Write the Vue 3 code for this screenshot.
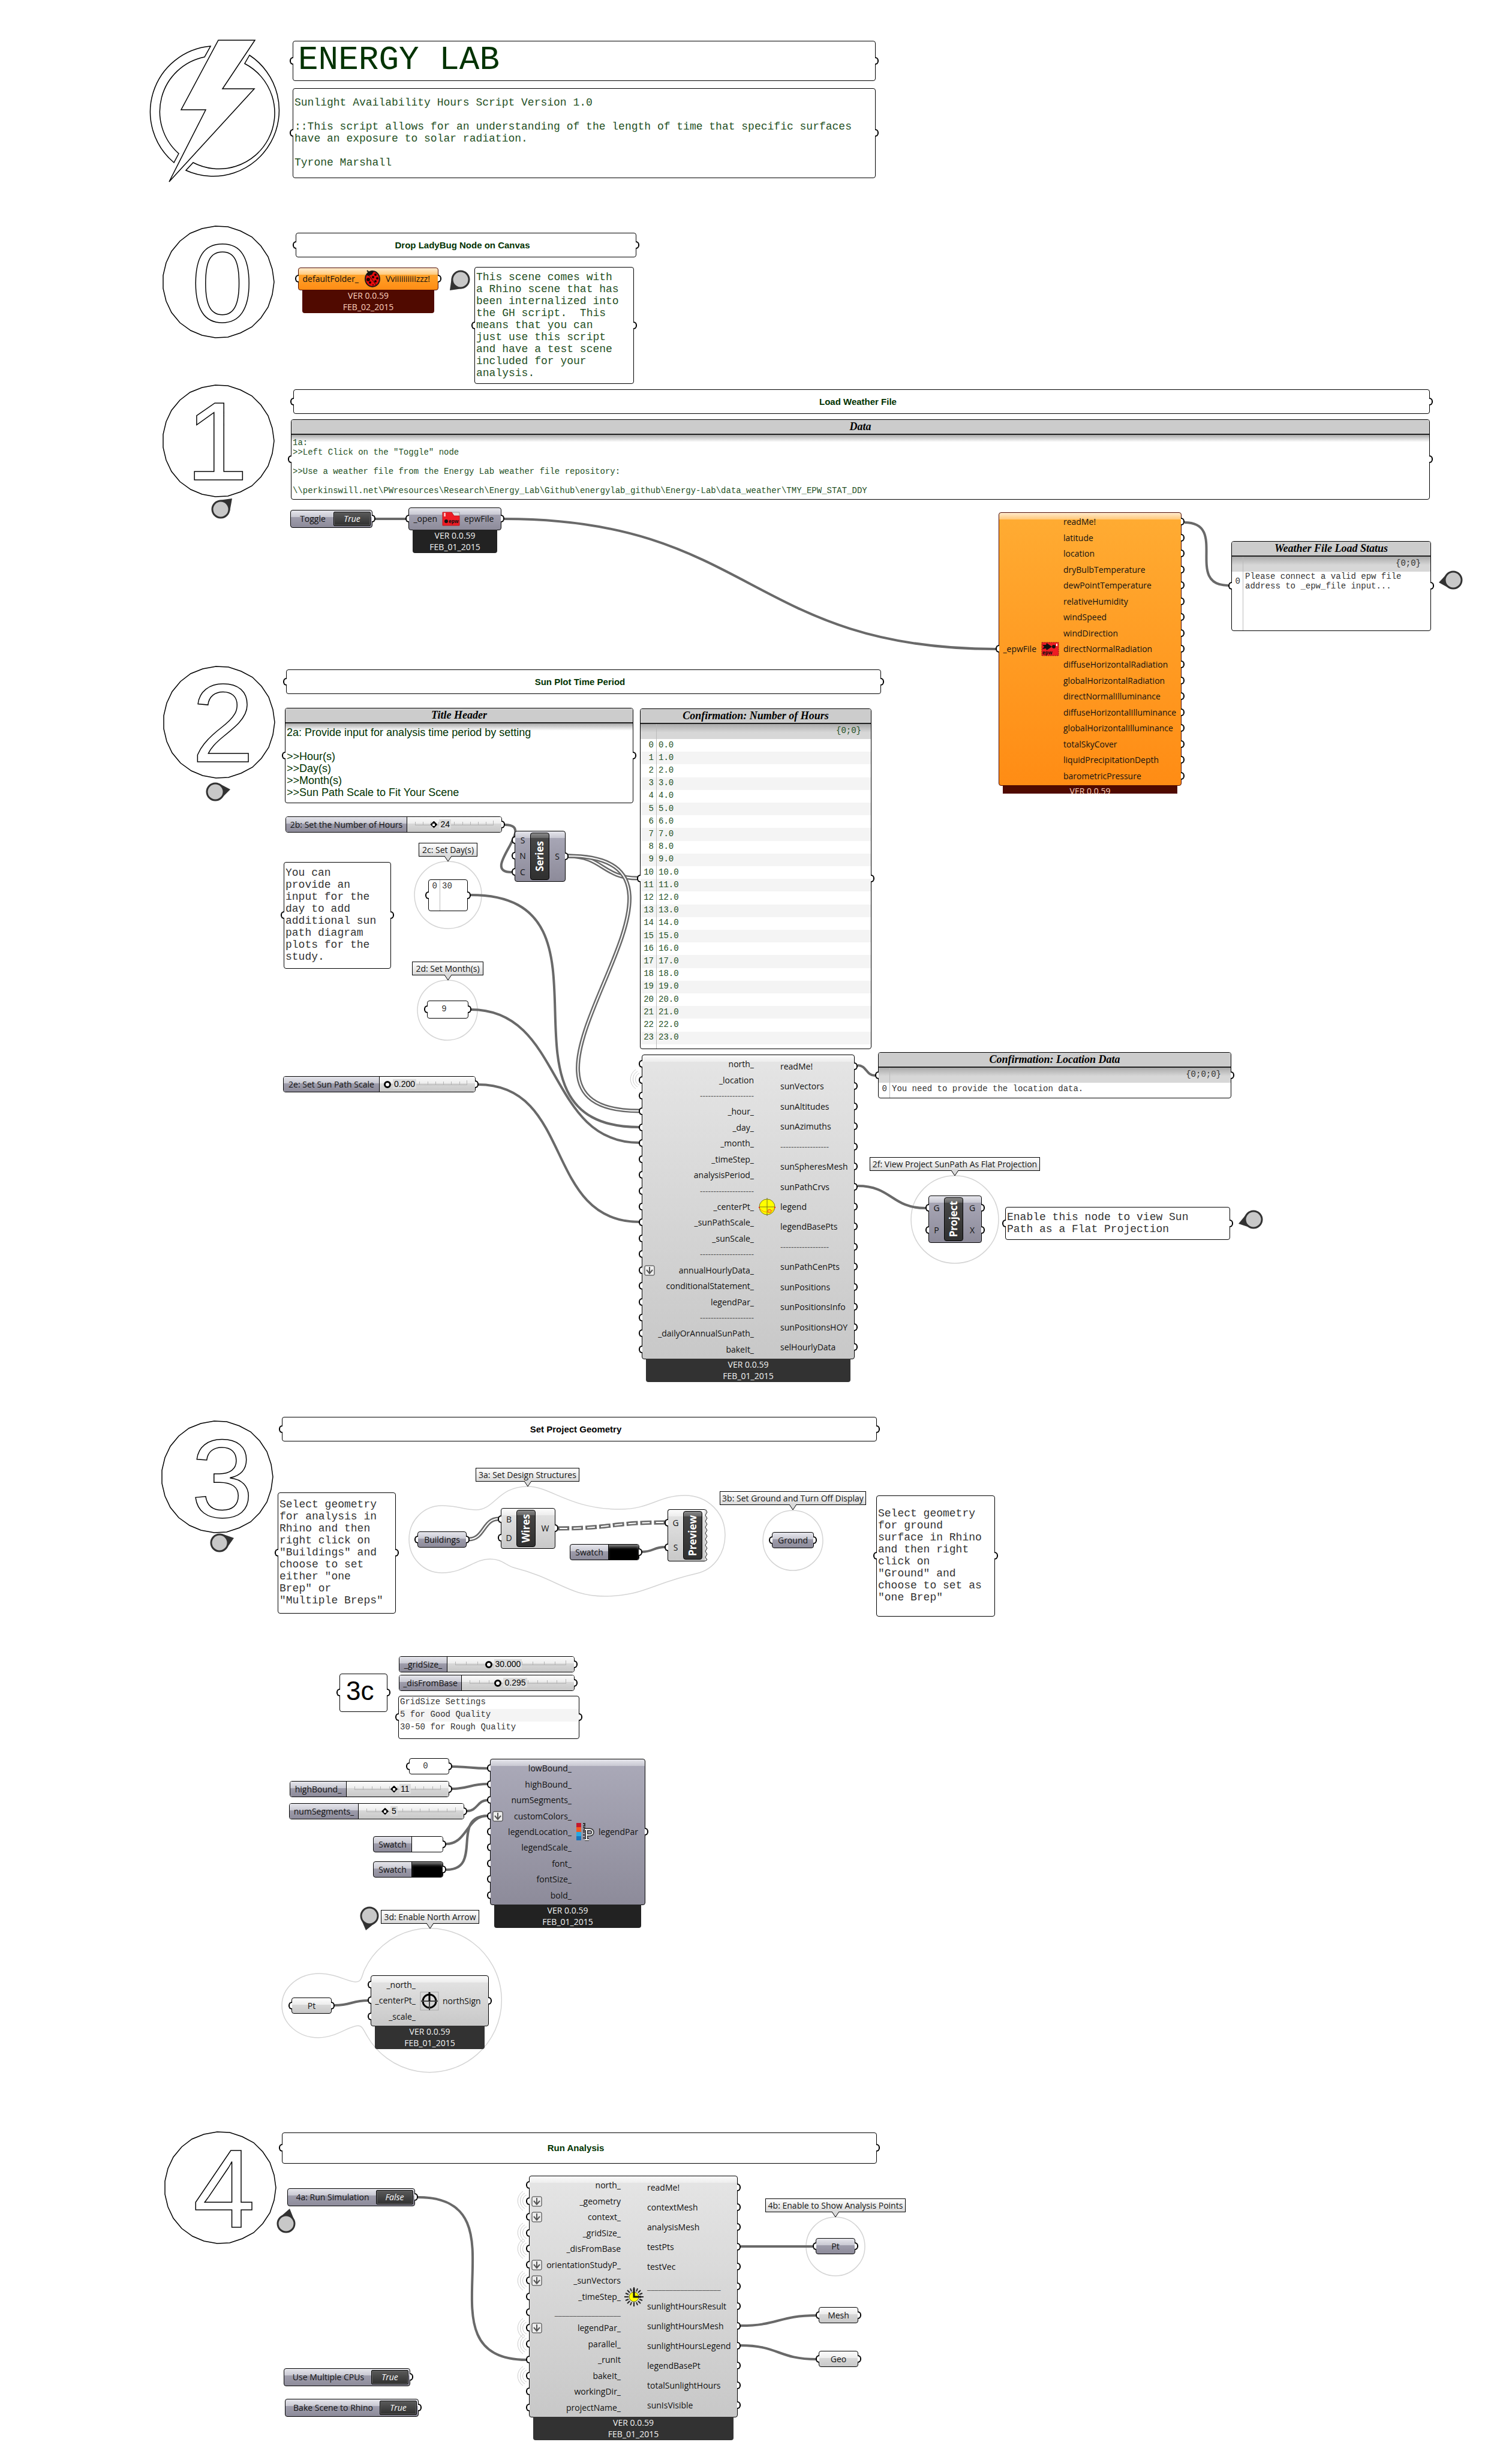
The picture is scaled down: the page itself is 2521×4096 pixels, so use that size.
<script setup>
import { reactive } from 'vue'

const box = (n) => ({ left: n.x + 'px', top: n.y + 'px', width: n.w + 'px', height: n.h + 'px' })

/* Numbered section badges: a 27-sided ring round an outlined digit */
const badges = [
  { n: '0', cx: 364, cy: 470, tx: 319, ty: 536 },
  { n: '1', cx: 364, cy: 735, tx: 310, ty: 800 },
  { n: '2', cx: 365, cy: 1204, tx: 320, ty: 1270 },
  { n: '3', cx: 362, cy: 2462, tx: 319, ty: 2529 },
  { n: '4', cx: 367, cy: 3647, tx: 322, ty: 3713 },
]
const ring = (cx, cy, r = 93, sides = 27) =>
  Array.from({ length: sides }, (_, i) => {
    const a = (i * 2 * Math.PI) / sides
    return Math.round(cx + r * Math.cos(a)) + ',' + Math.round(cy + r * Math.sin(a))
  }).join(' ')

/* Pins: centre of the disc and the tip they point at */
const pins = [
  { x: 768, y: 466, tx: 750, ty: 484 },
  { x: 368, y: 849, tx: 387, ty: 831 },
  { x: 2423, y: 967, tx: 2399, ty: 971 },
  { x: 359, y: 1320, tx: 384, ty: 1316 },
  { x: 2090, y: 2033, tx: 2065, ty: 2040 },
  { x: 366, y: 2572, tx: 390, ty: 2564 },
  { x: 616, y: 3194, tx: 610, ty: 3218 },
  { x: 477, y: 3707, tx: 483, ty: 3682 },
]
const pinTail = (p) => {
  const a = Math.atan2(p.ty - p.y, p.tx - p.x)
  const at = (d) => `${Math.round(p.x + 15 * Math.cos(a + d))},${Math.round(p.y + 15 * Math.sin(a + d))}`
  return `${p.tx},${p.ty} ${at(1)} ${at(-1)}`
}

/* Wires: S-curves that leave and arrive horizontally */
const curve = ([x1, y1, x2, y2]) => {
  const c = Math.round(Math.max((x2 - x1) / 2, Math.abs(y2 - y1) * 0.7))
  return `M${x1} ${y1}C${x1 + c} ${y1} ${x2 - c} ${y2} ${x2} ${y2}`
}
const wires = [
  [625, 865, 678, 865], [841, 865, 1661, 1082], [1975, 871, 2048, 976],
  [842, 1375, 853, 1454], [785, 1492, 1066, 1879], [785, 1683, 1066, 1905],
  [797, 1808, 1066, 2037], [1430, 1776, 1459, 1793], [1430, 1977, 1543, 2014],
  [1070, 2587, 1109, 2579], [753, 2945, 813, 2948], [753, 2982, 813, 2974],
  [779, 3019, 813, 3001], [744, 3074, 813, 3027], [744, 3117, 813, 3027],
  [558, 3343, 614, 3335], [697, 3663, 878, 3934], [1235, 3745, 1355, 3745],
  [1235, 3877, 1361, 3860], [1235, 3910, 1361, 3933],
]
const listWires = [[947, 1427, 1063, 1464], [947, 1427, 1066, 1852], [782, 2566, 831, 2532]]
const treeWire = [930, 2548, 1109, 2538]
const broadcasts = [[1066, 1799], [878, 3669], [878, 3722], [878, 3749], [878, 3802], [878, 3881], [878, 3908], [878, 3961]]

const groups = [[747, 1492, 56], [746, 1684, 50], [1592, 2033, 73], [1322, 2568, 50], [1393, 3745, 49]]

const headings = [
  { x: 493, y: 388, w: 568, h: 41, text: 'Drop LadyBug Node on Canvas' },
  { x: 489, y: 649, w: 1895, h: 41, text: 'Load Weather File' },
  { x: 477, y: 1116, w: 992, h: 41, text: 'Sun Plot Time Period' },
  { x: 470, y: 2362, w: 992, h: 41, text: 'Set Project Geometry', ink: true },
  { x: 470, y: 3555, w: 992, h: 52, text: 'Run Analysis' },
]

const notes = [
  { x: 488, y: 147, w: 972, h: 150, green: true, text: 'Sunlight Availability Hours Script Version 1.0\n\n::This script allows for an understanding of the length of time that specific surfaces\nhave an exposure to solar radiation.\n\nTyrone Marshall' },
  { x: 791, y: 445, w: 266, h: 195, green: true, text: 'This scene comes with\na Rhino scene that has\nbeen internalized into\nthe GH script.  This\nmeans that you can\njust use this script\nand have a test scene\nincluded for your\nanalysis.' },
  { x: 473, y: 1437, w: 179, h: 178, text: 'You can\nprovide an\ninput for the\nday to add\nadditional sun\npath diagram\nplots for the\nstudy.' },
  { x: 1676, y: 2012, w: 375, h: 55, text: 'Enable this node to view Sun\nPath as a Flat Projection' },
  { x: 463, y: 2488, w: 197, h: 202, text: 'Select geometry\nfor analysis in\nRhino and then\nright click on\n"Buildings" and\nchoose to set\neither "one\nBrep" or\n"Multiple Breps"' },
  { x: 1461, y: 2493, w: 198, h: 202, text: 'Select geometry\nfor ground\nsurface in Rhino\nand then right\nclick on\n"Ground" and\nchoose to set as\n"one Brep"' },
]

const titled = [
  { x: 485, y: 699, w: 1899, h: 134, title: 'Data', small: true, text: '1a:\n>>Left Click on the "Toggle" node\n\n>>Use a weather file from the Energy Lab weather file repository:\n\n\\\\perkinswill.net\\PWresources\\Research\\Energy_Lab\\Github\\energylab_github\\Energy-Lab\\data_weather\\TMY_EPW_STAT_DDY' },
  { x: 475, y: 1180, w: 581, h: 159, title: 'Title Header', text: '2a: Provide input for analysis time period by setting\n\n>>Hour(s)\n>>Day(s)\n>>Month(s)\n>>Sun Path Scale to Fit Your Scene' },
]

const lists = [
  { x: 2053, y: 902, w: 333, h: 150, title: 'Weather File Load Status', path: '{0;0}', idx: 18, table: 57, rows: ['Please connect a valid epw file\naddress to _epw_file input...'] },
  { x: 1067, y: 1181, w: 386, h: 568, title: 'Confirmation: Number of Hours', path: '{0;0}', idx: 26, green: true, table: 534, rows: Array.from({ length: 24 }, (_, i) => i + '.0') },
  { x: 1464, y: 1754, w: 589, h: 77, title: 'Confirmation: Location Data', path: '{0;0;0}', idx: 18, table: 46, rows: ['You need to provide the location data.'] },
  { x: 714, y: 1466, w: 66, h: 53, idx: 18, table: 21, rows: ['30'] },
]

const numbers = [
  { x: 712, y: 1668, w: 69, h: 30, text: '9' },
  { x: 682, y: 2931, w: 67, h: 27, text: '0' },
]

const callouts = [
  { x: 698, y: 1405, w: 98, h: 23, text: '2c: Set Day(s)' },
  { x: 687, y: 1603, w: 119, h: 23, text: '2d: Set Month(s)' },
  { x: 1450, y: 1929, w: 284, h: 23, text: '2f: View Project SunPath As Flat Projection' },
  { x: 793, y: 2447, w: 173, h: 23, text: '3a: Set Design Structures' },
  { x: 1200, y: 2486, w: 244, h: 23, text: '3b: Set Ground and Turn Off Display' },
  { x: 635, y: 3184, w: 164, h: 23, text: '3d: Enable North Arrow' },
  { x: 1276, y: 3665, w: 234, h: 23, text: '4b: Enable to Show Analysis Points' },
]

const sliders = reactive([
  { x: 476, y: 1361, w: 361, h: 27, name: 202, label: '2b: Set the Number of Hours', min: 0, max: 100, step: 1, value: 24, digits: 0 },
  { x: 472, y: 1794, w: 321, h: 27, name: 160, label: '2e: Set Sun Path Scale', min: 0.2, max: 10, step: 0.001, value: 0.2, digits: 3 },
  { x: 665, y: 2761, w: 293, h: 27, name: 80, label: '_gridSize_', min: 0, max: 100, step: 0.001, value: 30, digits: 3 },
  { x: 665, y: 2792, w: 293, h: 27, name: 104, label: '_disFromBase', min: 0, max: 1, step: 0.001, value: 0.295, digits: 3 },
  { x: 483, y: 2969, w: 266, h: 27, name: 94, label: 'highBound_', min: 0, max: 24, step: 1, value: 11, digits: 0 },
  { x: 482, y: 3006, w: 292, h: 27, name: 115, label: 'numSegments_', min: 0, max: 24, step: 1, value: 5, digits: 0 },
])
const share = (s) => (s.value - s.min) / (s.max - s.min)

const toggles = reactive([
  { x: 484, y: 850, w: 137, h: 30, label: 'Toggle', on: true },
  { x: 479, y: 3648, w: 213, h: 30, label: '4a: Run Simulation', on: false },
  { x: 473, y: 3948, w: 211, h: 30, label: 'Use Multiple CPUs', on: true },
  { x: 475, y: 3999, w: 223, h: 30, label: 'Bake Scene to Rhino', on: true },
])

const swatches = reactive([
  { x: 950, y: 2574, w: 116, h: 27, color: '#000000' },
  { x: 622, y: 3061, w: 117, h: 27, color: '#ffffff' },
  { x: 622, y: 3103, w: 117, h: 27, color: '#000000' },
])

const params = [
  { x: 696, y: 2553, w: 82, h: 27, label: 'Buildings', tone: 'blue' },
  { x: 1287, y: 2554, w: 70, h: 27, label: 'Ground', tone: 'blue' },
  { x: 486, y: 3330, w: 67, h: 27, label: 'Pt', tone: 'gray' },
  { x: 1360, y: 3731, w: 66, h: 27, label: 'Pt', tone: 'blue' },
  { x: 1365, y: 3846, w: 66, h: 27, label: 'Mesh', tone: 'gray' },
  { x: 1365, y: 3919, w: 66, h: 27, label: 'Geo', tone: 'gray' },
]

const pills = [
  { x: 858, y: 1385, w: 85, h: 85, label: 'Series', tone: 'blue', ins: ['S', 'N', 'C'], outs: ['S'] },
  { x: 1548, y: 1993, w: 89, h: 79, label: 'Project', tone: 'blue', ins: ['G', 'P'], outs: ['G', 'X'] },
  { x: 835, y: 2514, w: 91, h: 68, label: 'Wires', tone: 'gray', ins: ['B', 'D'], outs: ['W'] },
  { x: 1113, y: 2516, w: 62, h: 87, label: 'Preview', tone: 'gray', ins: ['G', 'S'], outs: [], torn: true },
]

const dash = (n) => '-'.repeat(n)
const rule = (n) => '_'.repeat(n)
const isRule = (t) => t.startsWith('--') || t.startsWith('__')
const components = [
  { x: 497, y: 446, w: 234, h: 38, tone: 'orange', icon: 'ladybug', left: 100, right: 145, ins: ['defaultFolder_'], outs: ['Vviiiiiiiiiizzz!'], date: 'FEB_02_2015' },
  { x: 681, y: 846, w: 155, h: 38, tone: 'blue', icon: 'folder', left: 47, right: 92, ins: ['_open'], outs: ['epwFile'], date: 'FEB_01_2015' },
  { x: 1665, y: 854, w: 305, h: 456, tone: 'orange', icon: 'import', left: 62, right: 107, cut: true, ins: ['_epwFile'], outs: ['readMe!', 'latitude', 'location', 'dryBulbTemperature', 'dewPointTemperature', 'relativeHumidity', 'windSpeed', 'windDirection', 'directNormalRadiation', 'diffuseHorizontalRadiation', 'globalHorizontalRadiation', 'directNormalIlluminance', 'diffuseHorizontalIlluminance', 'globalHorizontalIlluminance', 'totalSkyCover', 'liquidPrecipitationDepth', 'barometricPressure'] },
  { x: 1070, y: 1758, w: 355, h: 508, tone: 'gray', icon: 'sunpath', left: 186, right: 230, grafts: [13], ins: ['north_', '_location', dash(20), '_hour_', '_day_', '_month_', '_timeStep_', 'analysisPeriod_', dash(20), '_centerPt_', '_sunPathScale_', '_sunScale_', dash(20), 'annualHourlyData_', 'conditionalStatement_', 'legendPar_', dash(20), '_dailyOrAnnualSunPath_', 'bakeIt_'], outs: ['readMe!', 'sunVectors', 'sunAltitudes', 'sunAzimuths', dash(18), 'sunSpheresMesh', 'sunPathCrvs', 'legend', 'legendBasePts', dash(18), 'sunPathCenPts', 'sunPositions', 'sunPositionsInfo', 'sunPositionsHOY', 'selHourlyData'], date: 'FEB_01_2015' },
  { x: 817, y: 2932, w: 259, h: 244, tone: 'blue', icon: 'legend', left: 135, right: 180, grafts: [3], ins: ['lowBound_', 'highBound_', 'numSegments_', 'customColors_', 'legendLocation_', 'legendScale_', 'font_', 'fontSize_', 'bold_'], outs: ['legendPar'], date: 'FEB_01_2015' },
  { x: 618, y: 3293, w: 197, h: 85, tone: 'gray', icon: 'north', left: 74, right: 119, ins: ['_north_', '_centerPt_', '_scale_'], outs: ['northSign'], date: 'FEB_01_2015' },
  { x: 882, y: 3627, w: 348, h: 403, tone: 'gray', icon: 'clock', left: 152, right: 196, grafts: [1, 2, 5, 6, 9], ins: ['north_', '_geometry', 'context_', '_gridSize_', '_disFromBase', 'orientationStudyP_', '_sunVectors', '_timeStep_', rule(18), 'legendPar_', 'parallel_', '_runIt', 'bakeIt_', 'workingDir_', 'projectName_'], outs: ['readMe!', 'contextMesh', 'analysisMesh', 'testPts', 'testVec', rule(20), 'sunlightHoursResult', 'sunlightHoursMesh', 'sunlightHoursLegend', 'legendBasePt', 'totalSunlightHours', 'sunIsVisible'], date: 'FEB_01_2015' },
]
</script>

<template>
  <main class="canvas">
    <svg class="layer" aria-hidden="true">
      <g class="outline">
        <path d="M364 67H425L371 148H424L282 303L343 183H302Z" />
        <path d="M351 77A110 110 0 0 0 290 271L298 256A93 93 0 0 1 341 95Z" />
        <path d="M416 92A110 110 0 0 1 310 284L322 271A93 93 0 0 0 408 106Z" />
        <polygon v-for="b in badges" :key="b.n" :points="ring(b.cx, b.cy)" />
      </g>
      <text v-for="b in badges" :key="b.n" class="digit" :x="b.tx" :y="b.ty">{{ b.n }}</text>

      <g class="group">
        <circle v-for="(g, i) in groups" :key="i" :cx="g[0]" :cy="g[1]" :r="g[2]" />
        <path d="M682 2566C682 2535 706 2510 737 2510C762 2510 774 2517 794 2517C825 2517 830 2478 880 2478C918 2478 950 2516 1033 2516C1085 2516 1098 2493 1142 2493C1180 2493 1209 2522 1209 2559C1209 2588 1192 2616 1162 2623C1086 2640 1072 2661 1008 2661C948 2661 930 2632 859 2614C843 2610 838 2599 817 2599C790 2599 775 2622 737 2622C706 2622 682 2597 682 2566Z" />
        <path d="M533 3290C560 3290 580 3304 593 3304C604 3304 603 3293 608 3283A120 120 0 1 1 612 3394C606 3384 604 3377 597 3377C582 3377 560 3397 531 3397C497 3397 470 3373 470 3343C470 3314 497 3290 533 3290Z" />
      </g>

      <g class="wires">
        <path v-for="(w, i) in wires" :key="i" :d="curve(w)" />
        <template v-for="(w, i) in listWires" :key="i">
          <path class="outer" :d="curve(w)" />
          <path class="inner" :d="curve(w)" />
        </template>
        <path class="outer chain" :d="curve(treeWire)" />
        <path class="inner links" :d="curve(treeWire)" />
      </g>

      <g v-for="(b, i) in broadcasts" :key="i" class="broadcast">
        <path :d="`M${b[0]} ${b[1] - 10}a11 11 0 0 0 0 20`" />
        <path :d="`M${b[0] - 3} ${b[1] - 13}a15 15 0 0 0 0 26`" />
        <path :d="`M${b[0] - 6} ${b[1] - 16}a19 19 0 0 0 0 32`" />
      </g>

      <g v-for="(p, i) in pins" :key="i" class="pin">
        <polygon :points="pinTail(p)" />
        <circle :cx="p.x" :cy="p.y" r="14" />
      </g>
    </svg>

    <header class="node panel title" style="left: 488px; top: 68px; width: 972px; height: 67px">
      <h1>ENERGY LAB</h1>
      <i class="port in"></i><i class="port out"></i>
    </header>

    <div v-for="h in headings" :key="h.text" class="node panel heading" :class="{ ink: h.ink }" :style="box(h)">
      <h2>{{ h.text }}</h2>
      <i class="port in"></i><i class="port out"></i>
    </div>

    <div v-for="(n, i) in notes" :key="i" class="node panel note" :class="{ green: n.green }" :style="box(n)">
      <p>{{ n.text }}</p>
      <i class="port in"></i><i class="port out"></i>
    </div>

    <section v-for="t in titled" :key="t.title" class="node panel titled" :style="box(t)">
      <h3>{{ t.title }}</h3>
      <p :class="{ small: t.small }">{{ t.text }}</p>
      <i class="port in"></i><i class="port out"></i>
    </section>

    <section v-for="(l, i) in lists" :key="i" class="node panel list" :class="{ green: l.green }" :style="box(l)">
      <h3 v-if="l.title">{{ l.title }}</h3>
      <div class="rows">
        <table :style="{ height: l.table + 'px' }">
          <colgroup><col :style="{ width: l.idx + 'px' }" /><col /></colgroup>
          <thead v-if="l.path"><tr><th></th><th>{{ l.path }}</th></tr></thead>
          <tbody>
            <tr v-for="(r, k) in l.rows" :key="k"><td class="idx">{{ k }}</td><td>{{ r }}</td></tr>
          </tbody>
        </table>
        <span class="divider" :style="{ left: l.idx + 'px' }"></span>
      </div>
      <i class="port in"></i><i class="port out"></i>
    </section>

    <div v-for="n in numbers" :key="n.text" class="node panel number" :style="box(n)">
      {{ n.text }}
      <i class="port in"></i><i class="port out"></i>
    </div>

    <div class="node panel step" style="left: 566px; top: 2790px; width: 80px; height: 64px">
      3c
      <i class="port in"></i><i class="port out"></i>
    </div>

    <div class="node panel settings" style="left: 664px; top: 2827px; width: 302px; height: 72px">
      <ul>
        <li>GridSize Settings</li>
        <li>5 for Good Quality</li>
        <li>30-50 for Rough Quality</li>
      </ul>
      <i class="port in"></i><i class="port out"></i>
    </div>

    <div v-for="c in callouts" :key="c.text" class="callout" :style="box(c)">
      {{ c.text }}
      <svg width="14" height="10" viewBox="0 0 14 10" aria-hidden="true"><path d="M1 0L7 9L13 0" /></svg>
    </div>

    <div v-for="(s, i) in sliders" :key="s.label" class="node slider" :style="box(s)">
      <label class="blue" :for="'slider-' + i" :style="{ width: s.name + 'px' }">{{ s.label }}</label>
      <div class="range gray">
        <input :id="'slider-' + i" v-model.number="s.value" type="range" :class="{ whole: !s.digits }" :min="s.min" :max="s.max" :step="s.step" />
        <output :for="'slider-' + i" :style="{ left: `calc(22px + (100% - 26px) * ${share(s)})` }">{{ s.value.toFixed(s.digits) }}</output>
      </div>
      <i class="port out"></i>
    </div>

    <button v-for="t in toggles" :key="t.label" type="button" class="node toggle blue" :aria-pressed="t.on" :style="box(t)" @click="t.on = !t.on">
      <span>{{ t.label }}</span>
      <em>{{ t.on ? 'True' : 'False' }}</em>
      <i class="port out"></i>
    </button>

    <div v-for="(s, i) in swatches" :key="i" class="node swatch blue" :style="box(s)">
      <label :for="'swatch-' + i">Swatch</label>
      <input :id="'swatch-' + i" v-model="s.color" type="color" />
      <i class="port out"></i>
    </div>

    <div v-for="(p, i) in params" :key="i" class="node param" :class="p.tone" :style="box(p)">
      {{ p.label }}
      <i class="port in"></i><i class="port out"></i>
    </div>

    <div v-for="p in pills" :key="p.label" class="node pill" :class="[p.tone, { torn: p.torn }]" :style="box(p)">
      <div class="col">
        <span v-for="t in p.ins" :key="t" class="slot"><i class="port in"></i>{{ t }}</span>
      </div>
      <b><span>{{ p.label }}</span></b>
      <div class="col">
        <span v-for="t in p.outs" :key="t" class="slot">{{ t }}<i class="port out"></i></span>
      </div>
      <svg v-if="p.torn" class="tear" width="6" height="87" viewBox="0 0 6 87" aria-hidden="true">
        <path class="fill" d="M0 1L4 5L1 10L4 15L1 20L4 25L1 30L4 35L1 40L4 45L1 50L4 55L1 60L4 65L1 70L4 75L1 80L4 84L0 86Z" />
        <path class="edge" d="M0 1H2L4 5L1 10L4 15L1 20L4 25L1 30L4 35L1 40L4 45L1 50L4 55L1 60L4 65L1 70L4 75L1 80L4 84L2 86H0" />
      </svg>
    </div>

    <article v-for="(c, i) in components" :key="i" class="node component" :class="c.tone" :style="{ ...box(c), gridTemplateColumns: `${c.left}px ${c.right - c.left}px 1fr` }">
      <div class="col ins">
        <span v-for="(t, k) in c.ins" :key="k" class="slot" :class="{ faint: isRule(t) }">
          <i class="port in"></i>
          <svg v-if="c.grafts && c.grafts.includes(k)" class="graft" width="18" height="18" viewBox="0 0 18 18" aria-hidden="true">
            <rect x="1" y="1" width="16" height="16" rx="2" />
            <path d="M9 3V13M4 8L9 14L14 8" />
          </svg>
          {{ t }}
        </span>
      </div>
      <div class="icon">
        <svg v-if="c.icon === 'ladybug'" width="30" height="30" viewBox="0 0 30 30" aria-hidden="true">
          <path d="M10 5L6 1M15 4L14 1" stroke="#111" stroke-width="2" />
          <ellipse cx="15" cy="15" rx="12" ry="13" fill="#e80c0c" stroke="#1a1a1a" stroke-width="2" />
          <path d="M5 8C7 3 12 1 17 3L14 8L8 10Z" fill="#111" />
          <path d="M9 9L22 26" stroke="#111" stroke-width="1" />
          <g fill="#1a0000"><circle cx="8" cy="16" r="3" /><circle cx="20" cy="8" r="2" /><circle cx="16" cy="12" r="2" /><circle cx="23" cy="14" r="2" /><circle cx="20" cy="19" r="2" /><circle cx="11" cy="21" r="2" /><circle cx="16" cy="25" r="1" /></g>
        </svg>
        <svg v-else-if="c.icon === 'folder'" width="30" height="24" viewBox="0 0 30 24" aria-hidden="true">
          <path d="M16 1H29V8H20Z" fill="#ddd" stroke="#999" />
          <path d="M1 1H16L20 7H29V23H1Z" fill="#ee1c24" stroke="#c01018" />
          <rect x="3" y="2" width="3" height="6" fill="#fbb" />
          <circle cx="7" cy="16" r="3" fill="#111" />
          <text x="11" y="19" class="tiny">epw</text>
        </svg>
        <svg v-else-if="c.icon === 'import'" width="30" height="24" viewBox="0 0 30 24" aria-hidden="true">
          <rect x="1" y="1" width="28" height="22" fill="#ee1c24" stroke="#8a0c10" stroke-dasharray="2 1" />
          <path d="M2 5L8 5L9 2L18 8L9 14L8 11L2 12L5 8Z" fill="#111" />
          <circle cx="21" cy="8" r="3" fill="#111" /><rect x="25" y="3" width="2" height="4" fill="#fff" />
          <text x="2" y="21" class="tiny">epw</text>
        </svg>
        <svg v-else-if="c.icon === 'sunpath'" width="30" height="30" viewBox="0 0 30 30" aria-hidden="true">
          <circle cx="15" cy="15" r="13" fill="#ffff00" stroke="#7a7a20" />
          <path d="M15 0V30M2 15H28" stroke="#77771a" />
          <path d="M2 16C6 25 22 27 28 16" fill="none" stroke="#f80" stroke-width="1" />
          <circle cx="19" cy="22" r="3" fill="#fb3" stroke="#e60" /><circle cx="2" cy="16" r="1" fill="red" /><circle cx="28" cy="16" r="1" fill="red" />
        </svg>
        <svg v-else-if="c.icon === 'legend'" width="30" height="30" viewBox="0 0 30 30" aria-hidden="true">
          <rect width="8" height="8" fill="#c4172c" /><rect y="7" width="8" height="8" fill="#f15a24" /><rect y="15" width="8" height="7" fill="#29abe2" /><rect y="22" width="8" height="7" fill="#1b75bc" />
          <path d="M11 1h3v4h-3M11 8h3v4h-3M11 15h3M11 20h3M11 25h3" fill="none" stroke="#333" stroke-width="2" />
          <path d="M17 28V11H22C29 11 29 20 22 20H18M14 28H21M14 11H18" fill="none" stroke="#333" stroke-width="5" />
          <path d="M17 28V11H22C29 11 29 20 22 20H18M14 28H21M14 11H18" fill="none" stroke="#eee" stroke-width="2" />
        </svg>
        <svg v-else-if="c.icon === 'north'" width="32" height="32" viewBox="0 0 32 32" aria-hidden="true">
          <rect x="1" y="1" width="30" height="30" fill="none" stroke="#aaa" />
          <circle cx="16" cy="16" r="11" fill="none" stroke="#000" stroke-width="3" />
          <path d="M2 16H30M16 16V31" stroke="#444" stroke-width="2" /><path d="M16 1V16" stroke="#000" stroke-width="3" />
        </svg>
        <svg v-else width="32" height="32" viewBox="0 0 32 32" aria-hidden="true">
          <path d="M16 0V7M16 25V32M0 16H7M25 16H32M5 5L9 9M23 23L27 27M5 27L9 23M23 9L27 5M10 2L12 7M20 25L22 30M22 2L20 7M12 25L10 30M2 10L7 12M25 20L30 22M2 22L7 20M25 12L30 10" stroke="#222" stroke-width="2" />
          <circle cx="16" cy="16" r="8" fill="#ffff00" stroke="#6a6a20" />
          <path d="M16 2V16H28" fill="none" stroke="#111" stroke-width="3" />
        </svg>
      </div>
      <div class="col outs">
        <span v-for="(t, k) in c.outs" :key="k" class="slot" :class="{ faint: isRule(t) }">{{ t }}<i class="port out"></i></span>
      </div>
      <footer :class="{ cut: c.cut }">VER 0.0.59<br v-if="c.date" />{{ c.date }}</footer>
    </article>
  </main>
</template>

<style>
body {
  margin: 0;
  background: #fff;
}
</style>

<style scoped>
.canvas {
  position: relative;
  width: 100%;
  min-height: 100vh;
  color: #111;
  font: 14px/20px 'Open Sans', 'Noto Sans', sans-serif;
}
.canvas *,
.canvas *::before,
.canvas *::after {
  box-sizing: border-box;
}
h1, h2, h3, p, ul {
  margin: 0;
  padding: 0;
}

/* Backdrop drawing */
.layer {
  position: absolute;
  inset: 0;
  width: 100%;
  height: 100%;
  overflow: visible;
}
.outline {
  fill: none;
  stroke: #000;
  stroke-width: 1.5;
}
.digit {
  font: 186px 'Liberation Sans', Arial, sans-serif;
  fill: none;
  stroke: #000;
  stroke-width: 1.5;
}
.group {
  fill: none;
  stroke: #d4d4d4;
  stroke-width: 1.5;
}
.wires {
  fill: none;
  stroke: #696969;
  stroke-width: 4;
}
.wires .outer {
  stroke-width: 7;
}
.wires .inner {
  stroke: #fff;
  stroke-width: 2;
}
.wires .chain {
  stroke-dasharray: 19 4;
}
.wires .links {
  stroke-dasharray: 13 10;
  stroke-dashoffset: -3;
}
.broadcast {
  fill: none;
  stroke: #ccc;
}
.pin polygon {
  fill: #323232;
}
.pin circle {
  fill: #c8c8c8;
  stroke: #323232;
  stroke-width: 3;
}

/* Node shells */
.node {
  position: absolute;
  border: 1px solid #000;
  border-radius: 4px;
}
.port {
  position: absolute;
  top: 50%;
  width: 6px;
  height: 13px;
  margin-top: -7px;
  border: 2px solid #000;
  background: #fff;
}
.port.in {
  right: 100%;
  border-right: 0;
  border-radius: 7px 0 0 7px;
}
.port.out {
  left: 100%;
  border-left: 0;
  border-radius: 0 7px 7px 0;
}
.gray {
  background:
    linear-gradient(#fcfcfc, #ededed) top / 100% 11px no-repeat,
    linear-gradient(#e5e5e5, #c8c8c8);
}
.blue {
  background:
    linear-gradient(#e6e6ec, #c8c8d2) top / 100% 11px no-repeat,
    linear-gradient(#abaab9, #8d8b9a);
}
.orange {
  border-color: #500a00;
  background:
    linear-gradient(#ffebcd, #ffc878) top / 100% 11px no-repeat,
    linear-gradient(#ffac33, #ff8c14);
}

/* Panels */
.panel {
  background: #fff;
}
.title,
.heading,
.titled {
  color: #003200;
}
.note,
.list,
.number,
.settings {
  color: #333;
}
.panel.green,
.titled .small {
  color: #245024;
}
.title {
  display: flex;
  align-items: center;
  padding: 0 8px 4px;
}
.title h1 {
  font: 56px/56px 'Liberation Mono', 'Courier New', monospace;
}
.heading {
  display: flex;
  align-items: center;
  justify-content: center;
  padding-right: 12px;
}
.heading.ink {
  color: #000;
}
.heading h2 {
  font: bold 15px/20px 'Liberation Sans', Arial, sans-serif;
}
.note {
  display: flex;
  align-items: center;
  padding: 0 0 2px 2px;
}
.note p {
  font: 18px/20px 'Liberation Mono', 'Courier New', monospace;
  white-space: pre;
}
h3 {
  height: 25px;
  border-bottom: 2px solid #222;
  border-radius: 3px 3px 0 0;
  background: #ccc;
  color: #000;
  font: italic bold 18px/22px 'Liberation Serif', 'Times New Roman', serif;
  text-align: center;
}
.titled p {
  padding: 5px 2px;
  background: linear-gradient(#aaa, #fff) top / 100% 12px no-repeat;
  font: 18px/20px 'Liberation Sans', Arial, sans-serif;
  white-space: pre;
}
.titled p.small {
  padding-left: 2px;
  font: 14px/16px 'Liberation Mono', 'Courier New', monospace;
}
.list {
  display: flex;
  flex-direction: column;
}
.rows {
  position: relative;
  flex: 1;
}
.divider {
  position: absolute;
  top: 0;
  bottom: 0;
  width: 1px;
  background: #bbb;
}
.list table {
  width: 100%;
  border-collapse: collapse;
  table-layout: fixed;
  font: 14px/16px 'Liberation Mono', 'Courier New', monospace;
}
.list th {
  height: 25px;
  padding: 0 16px 3px 0;
  font-weight: normal;
  text-align: right;
}
.list thead {
  background: linear-gradient(#aaa, #d7d7d7 14px);
}
.list td {
  height: 21px;
  padding: 0 0 2px 4px;
  white-space: pre;
}
.list td.idx {
  padding: 0 4px 2px 0;
  text-align: right;
}
.list tbody tr:nth-child(even) {
  background: #f4f4f4;
}
.number {
  display: flex;
  align-items: center;
  justify-content: center;
  padding: 0 12px 2px 0;
  font: 14px/16px 'Liberation Mono', 'Courier New', monospace;
}
.step {
  display: flex;
  align-items: center;
  padding: 0 0 6px 10px;
  color: #000;
  font: 44px/44px 'Liberation Sans', Arial, sans-serif;
}
.settings ul {
  list-style: none;
  font: 14px/18px 'Liberation Mono', 'Courier New', monospace;
}
.settings li {
  height: 21px;
  padding-left: 2px;
}
.settings li:nth-child(even) {
  background: #f4f4f4;
}

/* Callouts */
.callout {
  position: absolute;
  border: 1px solid #000;
  background: linear-gradient(#fff, #d9d9d9);
  line-height: 21px;
  text-align: center;
  white-space: nowrap;
}
.callout svg {
  position: absolute;
  left: calc(50% - 7px);
  top: 100%;
  fill: #d9d9d9;
  stroke: #000;
}

/* Sliders */
.slider {
  display: flex;
}
.slider label {
  border-right: 1px solid #000;
  border-radius: 3px 0 0 3px;
  line-height: 25px;
  text-align: center;
  white-space: nowrap;
}
.range {
  position: relative;
  flex: 1;
  padding: 0 7px;
  border-radius: 0 3px 3px 0;
}
.range input {
  display: block;
  width: 100%;
  height: 25px;
  margin: 0;
  appearance: none;
  background:
    linear-gradient(#b4b4b4, #b4b4b4) 6px 13px / calc(100% - 12px) 1px no-repeat,
    linear-gradient(#b4b4b4, #b4b4b4) calc(100% - 6px) 6px / 1px 7px no-repeat,
    repeating-linear-gradient(90deg, #b4b4b4 0 1px, transparent 1px 10%) 6px 8px / calc(100% - 12px) 5px no-repeat;
}
.range input::-webkit-slider-thumb {
  appearance: none;
  width: 12px;
  height: 12px;
  border: 3px solid #000;
  border-radius: 6px;
  background: #fff;
}
.range input.whole::-webkit-slider-thumb {
  border: 0;
  border-radius: 0;
  clip-path: polygon(50% 0, 100% 50%, 50% 100%, 0 50%);
  background: conic-gradient(from 45deg at 50% 50%, #fff, #fff) center / 4px 4px no-repeat, #000;
}
.range output {
  position: absolute;
  top: 4px;
  padding: 0 2px;
  background: #dcdcdc;
  color: #000;
  font: 14px/16px 'Liberation Sans', Arial, sans-serif;
  pointer-events: none;
}

/* Toggles and swatches */
.toggle {
  display: flex;
  align-items: stretch;
  padding: 2px;
  color: #111;
  font: inherit;
}
.toggle > span {
  flex: 1;
  line-height: 24px;
  text-align: center;
  white-space: nowrap;
}
.toggle em {
  width: 62px;
  border: 1px solid #000;
  border-radius: 2px;
  background: linear-gradient(#5a5a5a, #303030);
  box-shadow: inset 0 0 0 1px #666;
  color: #fff;
  line-height: 22px;
  text-align: center;
}
.swatch {
  display: flex;
}
.swatch label {
  width: 63px;
  line-height: 25px;
  text-align: center;
}
.swatch input {
  flex: 1;
  min-width: 0;
  height: 25px;
  padding: 0;
  border: 0;
  border-left: 1px solid #000;
  border-radius: 0 3px 3px 0;
  appearance: none;
  background: none;
}
.swatch input::-webkit-color-swatch-wrapper {
  padding: 0;
}
.swatch input::-webkit-color-swatch {
  border: 0;
  border-radius: 0 3px 3px 0;
  box-shadow: inset 0 6px 5px -2px rgba(255, 255, 255, 0.5);
}

/* Parameters and components */
.param {
  display: flex;
  align-items: center;
  justify-content: center;
}
.col {
  display: flex;
  flex-direction: column;
}
.slot {
  position: relative;
  display: flex;
  flex: 1;
  align-items: center;
  white-space: nowrap;
}
.pill {
  display: grid;
  grid-template-columns: 25px 32px 1fr;
  padding: 2px 0;
}
.pill .slot {
  justify-content: center;
}
.pill > b {
  display: flex;
  align-items: center;
  justify-content: center;
  border: 1px solid #000;
  border-radius: 4px;
  background:
    linear-gradient(#8a8a8a, #666) top / 100% 8px no-repeat,
    linear-gradient(#484848, #303030);
  color: #fff;
  font-size: 17px;
}
.pill > b span {
  writing-mode: vertical-rl;
  transform: rotate(180deg);
}
.pill.torn {
  border-right: 0;
  border-radius: 4px 0 0 4px;
}
.tear {
  position: absolute;
  top: -1px;
  left: 100%;
}
.tear .fill {
  fill: #ddd;
}
.tear .edge {
  fill: none;
  stroke: #222;
}
.component {
  display: grid;
  padding: 2px 0;
}
.ins .slot {
  justify-content: flex-end;
}
.faint {
  color: #555;
}
.icon {
  display: flex;
  align-items: center;
  justify-content: center;
}
.tiny {
  font: bold 8px 'Open Sans', sans-serif;
  fill: #111;
}
.graft {
  position: absolute;
  left: 3px;
  fill: #eee;
  stroke: #333;
  stroke-width: 1;
}
.graft path {
  fill: none;
  stroke: #555;
  stroke-width: 2;
}
.component footer {
  position: absolute;
  top: 100%;
  left: 6px;
  right: 6px;
  height: 39px;
  border-radius: 0 0 4px 4px;
  background: #323232;
  color: #f4f4f4;
  line-height: 19px;
  text-align: center;
}
.blue footer {
  background: #222;
}
.orange footer {
  background: #500a00;
  color: #ffd2be;
}
.component footer.cut {
  height: 14px;
  border-radius: 0;
  overflow: hidden;
}
</style>
